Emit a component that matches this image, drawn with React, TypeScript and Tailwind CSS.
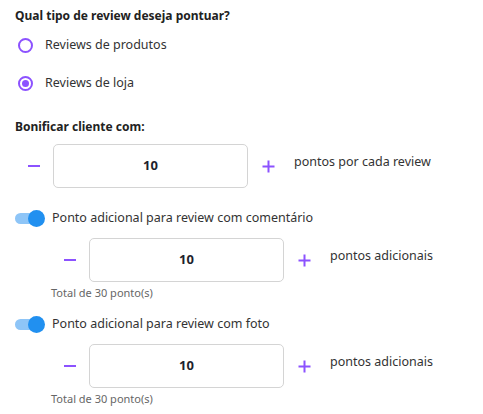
import { useState } from 'react';

const font = { fontFamily: '"Noto Sans", "Open Sans", sans-serif' };

function Minus() {
  return <span className="block w-[12px] h-[2px] bg-[#8c52ff]" />;
}

function Plus() {
  return (
    <svg width="13" height="13" viewBox="0 0 13 13">
      <path d="M6.5 0.5V12.5M0.5 6.5H12.5" stroke="#8c52ff" strokeWidth="2" />
    </svg>
  );
}

function Stepper({ value, label }: { value: number; label: string }) {
  return (
    <div className="flex items-center">
      <button className="w-[38px] h-[44px] flex items-center justify-center">
        <Minus />
      </button>
      <div className="w-[195px] h-[44px] border border-[#d4d4d4] rounded-[5px] flex items-center justify-center text-[13px] font-bold text-[#1f1f2e]">
        {value}
      </div>
      <button className="w-[40px] h-[44px] flex items-center justify-center">
        <Plus />
      </button>
      <span className="ml-[6px] mb-[7px] text-[12.5px] text-[#333]">{label}</span>
    </div>
  );
}

function Radio({ checked, label }: { checked: boolean; label: string }) {
  return (
    <label className="flex items-center h-[38px] gap-[12px] pl-[3px]">
      <span className="w-[15px] h-[15px] rounded-full border-2 border-[#8c52ff] flex items-center justify-center">
        {checked && <span className="w-[7px] h-[7px] rounded-full bg-[#8c52ff]" />}
      </span>
      <span className="text-[12.5px] text-[#333]">{label}</span>
    </label>
  );
}

function Toggle({ label }: { label: string }) {
  return (
    <div className="flex items-center h-[22px] gap-[7px]">
      <div className="relative w-[30px] h-[17px] flex items-center">
        <span className="w-[24px] h-[11px] rounded-full bg-[#8ec5f7]" />
        <span className="absolute right-0 top-0 w-[17px] h-[17px] rounded-full bg-[#2190f0]" />
      </div>
      <span className="text-[12.5px] text-[#333]">{label}</span>
    </div>
  );
}

export default function App() {
  const [type] = useState('loja');

  return (
    <div className="w-[483px] h-[414px] bg-white pl-[15px] pt-[7px]" style={font}>
      <p className="text-[12px] font-bold text-[#222] leading-[18px]">Qual tipo de review deseja pontuar?</p>
      <div className="mt-[1px]">
        <Radio checked={type === 'produtos'} label="Reviews de produtos" />
        <Radio checked={type === 'loja'} label="Reviews de loja" />
      </div>

      <p className="mt-[16px] text-[12px] font-bold text-[#222] leading-[18px]">Bonificar cliente com:</p>
      <div className="mt-[8px]">
        <Stepper value={10} label="pontos por cada review" />
      </div>

      <div className="mt-[19px]">
        <Toggle label="Ponto adicional para review com comentário" />
      </div>
      <div className="ml-[36px] mt-[9px]">
        <Stepper value={10} label="pontos adicionais" />
        <p className="mt-[3px] text-[11px] leading-[15px] text-[#666]">Total de 30 ponto(s)</p>
      </div>

      <div className="mt-[13px]">
        <Toggle label="Ponto adicional para review com foto" />
      </div>
      <div className="ml-[36px] mt-[9px]">
        <Stepper value={10} label="pontos adicionais" />
        <p className="mt-[3px] text-[11px] leading-[15px] text-[#666]">Total de 30 ponto(s)</p>
      </div>
    </div>
  );
}
